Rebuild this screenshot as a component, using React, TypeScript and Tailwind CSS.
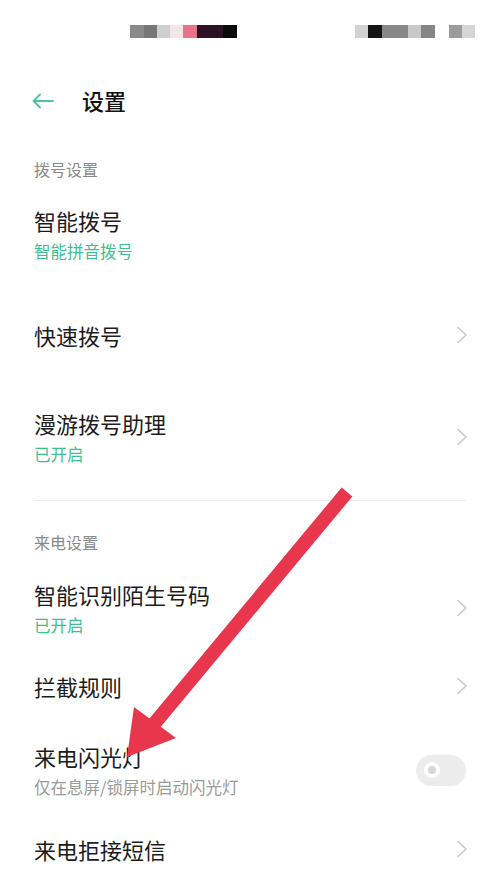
import React from 'react';

const font = { fontFamily: '"Noto Sans CJK SC", "Noto Sans", sans-serif' };

const Chevron = () => (
  <svg width="12" height="18" viewBox="0 0 12 18" fill="none" className="shrink-0 mr-[32px]">
    <path d="M2 1.5 L10 9 L2 16.5" stroke="#c9c9c9" strokeWidth="1.6" strokeLinecap="round" strokeLinejoin="round" />
  </svg>
);

const Toggle = () => (
  <div className="w-[50px] h-[31px] rounded-full bg-[#ececec] flex items-center pl-[8px] mr-[34px] shrink-0">
    <div className="w-[16px] h-[16px] rounded-full border-[4px] border-white bg-[#d6d6d6]" />
  </div>
);

interface RowProps {
  title: string;
  sub?: string;
  subGreen?: boolean;
  right?: 'chevron' | 'toggle';
  pt: string;
}

const Row: React.FC<RowProps> = ({ title, sub, subGreen = true, right, pt }) => (
  <div className={`flex items-center justify-between pl-[34px] ${pt}`}>
    <div className="flex flex-col">
      <span className="text-[22px] leading-[28px] text-[#1c1c1c]">{title}</span>
      {sub && (
        <span className={`mt-[6px] text-[16.5px] leading-[22px] ${subGreen ? 'text-[#3fbf8f]' : 'text-[#9a9a9a]'}`}>
          {sub}
        </span>
      )}
    </div>
    {right === 'chevron' && <Chevron />}
    {right === 'toggle' && <Toggle />}
  </div>
);

const Mosaic = ({ cells }: { cells: [number, string][] }) => (
  <div className="flex h-[13px]">
    {cells.map(([w, c], i) => (
      <div key={i} style={{ width: w, background: c }} />
    ))}
  </div>
);

export default function App() {
  return (
    <div className="relative w-[500px] h-[888px] overflow-hidden bg-white" style={font}>
      {/* status bar (blurred) */}
      <div className="h-[58px] flex items-start pt-[25px]">
        <div className="ml-[130px]">
          <Mosaic cells={[[14, '#8a8a8a'], [13, '#777'], [13, '#cfcfcf'], [13, '#f3e4e8'], [14, '#e9738b'], [26, '#2c1222'], [14, '#0a0a0a']]} />
        </div>
        <div className="ml-[118px]">
          <Mosaic cells={[[13, '#d2d2d2'], [14, '#151515'], [26, '#888'], [13, '#c8c8c8'], [14, '#858585']]} />
        </div>
        <div className="ml-[14px]">
          <Mosaic cells={[[13, '#9c9c9c'], [13, '#d6d6d6']]} />
        </div>
      </div>

      {/* header */}
      <div className="h-[84px] flex items-center pl-[32px]">
        <svg width="22" height="16" viewBox="0 0 22 16" fill="none" className="mt-[2px]">
          <path d="M21 8 H1.5 M8 1.5 L1.5 8 L8 14.5" stroke="#4cc497" strokeWidth="1.8" strokeLinecap="round" strokeLinejoin="round" />
        </svg>
        <span className="ml-[28px] text-[22px] font-medium text-[#111]">设置</span>
      </div>

      <div className="pl-[34px] mt-[17px] text-[16px] leading-[20px] text-[#8a8a8a]">拨号设置</div>
      <Row title="智能拨号" sub="智能拼音拨号" pt="pt-[27px]" />
      <Row title="快速拨号" right="chevron" pt="pt-[59px]" />
      <Row title="漫游拨号助理" sub="已开启" right="chevron" pt="pt-[60px]" />

      <div className="mt-[35px] mx-[34px] h-px bg-[#ebebeb]" />

      <div className="pl-[34px] mt-[31px] text-[16px] leading-[20px] text-[#8a8a8a]">来电设置</div>
      <Row title="智能识别陌生号码" sub="已开启" right="chevron" pt="pt-[28px]" />
      <Row title="拦截规则" right="chevron" pt="pt-[36px]" />
      <Row title="来电闪光灯" sub="仅在息屏/锁屏时启动闪光灯" subGreen={false} right="toggle" pt="pt-[42px]" />
      <Row title="来电拒接短信" right="chevron" pt="pt-[37px]" />

      {/* annotation arrow */}
      <svg className="absolute inset-0 pointer-events-none" width="500" height="888" viewBox="0 0 500 888">
        <line x1="347" y1="492" x2="154" y2="724" stroke="#e8374c" strokeWidth="14" />
        <polygon points="127,757 134,707 176,738" fill="#e8374c" />
      </svg>
    </div>
  );
}
